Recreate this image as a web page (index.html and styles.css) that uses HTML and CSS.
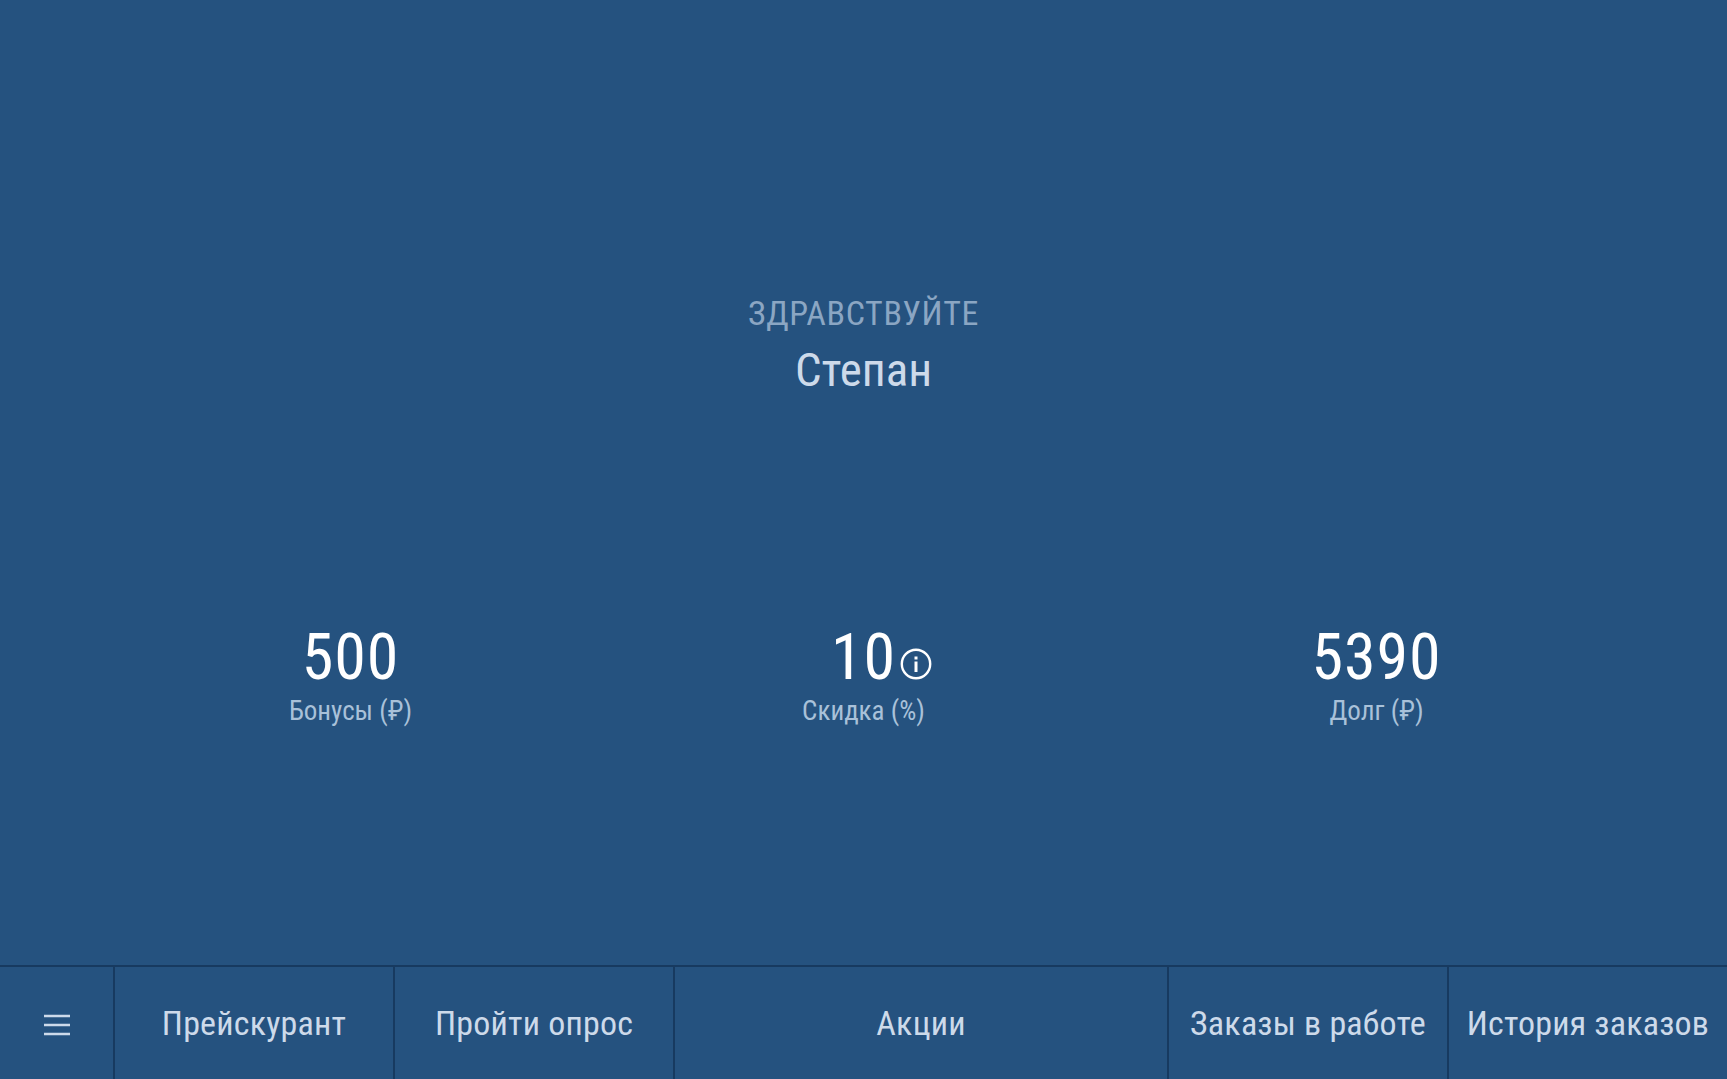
FILE: index.html
```html
<!DOCTYPE html>
<html lang="ru">
<head>
<meta charset="utf-8">
<title>Кабинет</title>
<link rel="stylesheet" href="styles.css">
</head>
<body>
<div class="app">
  <main class="main">
    <section class="hello">
      <div class="hello-sub">ЗДРАВСТВУЙТЕ</div>
      <div class="hello-name">Степан</div>
    </section>
    <section class="stats">
      <div class="stat">
        <div class="stat-value"><span class="num">500</span></div>
        <div class="stat-label">Бонусы (₽)</div>
      </div>
      <div class="stat">
        <div class="stat-value"><span class="num">10<svg class="info" viewBox="0 0 32 32"><circle cx="16" cy="16" r="14.2" fill="none" stroke="#fff" stroke-width="2.4"/><rect x="14.5" y="13.5" width="3" height="10.5" fill="#fff"/><rect x="14.5" y="8.5" width="3" height="3" fill="#fff"/></svg></span></div>
        <div class="stat-label">Скидка (%)</div>
      </div>
      <div class="stat">
        <div class="stat-value"><span class="num">5390</span></div>
        <div class="stat-label">Долг (₽)</div>
      </div>
    </section>
  </main>
  <nav class="nav">
    <a class="nav-item nav-menu"><svg class="burger" viewBox="0 0 26 22"><path d="M0 2h26M0 11h26M0 20h26" stroke="#cddaea" stroke-width="2.6"/></svg></a>
    <a class="nav-item nav-w1">Прейскурант</a>
    <a class="nav-item nav-w1">Пройти опрос</a>
    <a class="nav-item nav-grow">Акции</a>
    <a class="nav-item nav-w1">Заказы в работе</a>
    <a class="nav-item nav-last">История заказов</a>
  </nav>
</div>
</body>
</html>
```
FILE: styles.css
```css
* { box-sizing: border-box; }
html, body { margin: 0; height: 100%; }
body {
  background: #25527f;
  font-family: "Roboto Condensed", Roboto, "Liberation Sans", sans-serif;
  font-stretch: 75%;
  color: #fff;
}
.app { height: 1079px; display: flex; flex-direction: column; overflow: hidden; }
.main { flex: 1; display: flex; flex-direction: column; align-items: stretch; padding-top: 289px; }
.hello { text-align: center; }
.hello-sub { font-size: 34px; line-height: 48px; letter-spacing: 0.6px; color: #8ba6c3; }
.hello-name { font-size: 47px; line-height: 66px; color: #cddaea; }
.stats { display: flex; padding: 0 94px; margin-top: 221px; }
.stat { flex: 1; text-align: center; }
.stat-value { font-size: 64px; line-height: 67px; display: flex; justify-content: center; letter-spacing: 0.9px; }
.num { position: relative; }
.info { position: absolute; left: 100%; top: 24px; width: 32px; height: 32px; margin-left: 4px; }
.stat-label { font-size: 27px; line-height: 40px; color: #a9c1d9; }
.nav { height: 114px; display: flex; border-top: 2px solid #173a60; }
.nav-item {
  display: flex; align-items: center; justify-content: center;
  font-size: 34px; color: #cddaea; letter-spacing: 0.2px; white-space: nowrap;
  border-right: 2px solid #173a60;
}
.nav-menu { width: 115px; }
.nav-w1 { width: 280px; }
.nav-grow { flex: 1; }
.nav-last { width: 278px; border-right: 0; }
.burger { width: 26px; height: 22px; margin-top: 4px; }
```
